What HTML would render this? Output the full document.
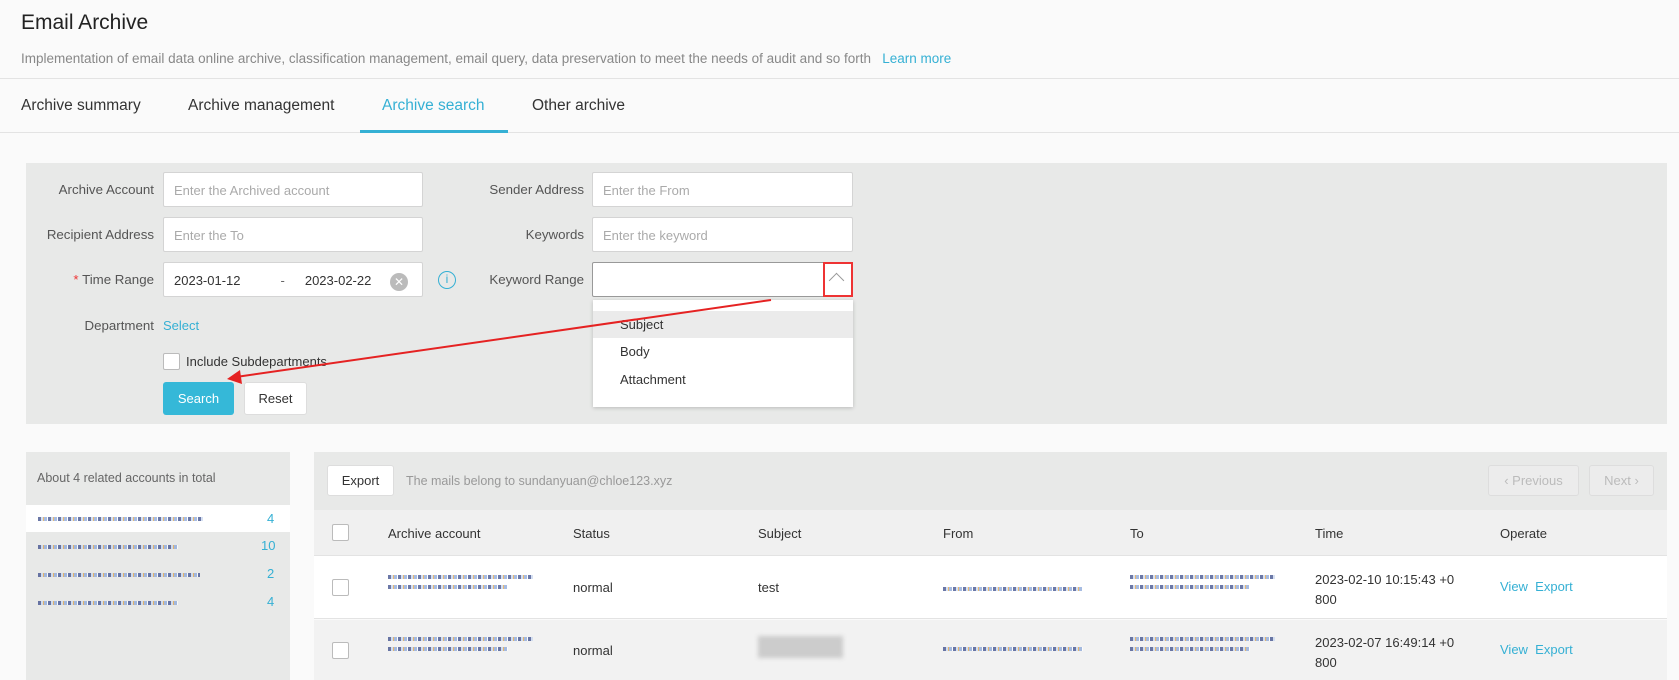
<!DOCTYPE html>
<html><head><meta charset="utf-8"><style>
*{box-sizing:border-box;margin:0;padding:0}
body{width:1679px;height:680px;overflow:hidden;background:#fafafa;font-family:"Liberation Sans",Arial,sans-serif;color:#333;position:relative;font-size:13px}
.a{position:absolute;white-space:nowrap}
.inp{position:absolute;background:#fff;border:1px solid #d4d4d4;border-radius:2px;height:35px;font-size:13px;color:#aaa;padding:10px 10px}
.lbl{position:absolute;text-align:right;width:140px;font-size:13.3px;color:#555}
.blur{position:absolute;height:4px;background:repeating-linear-gradient(90deg,#3a4b8a 0 3px,#c8d6ee 3px 5px,#e0a040 5px 6px,#8aa6d8 6px 9px,#fff 9px 10px);opacity:.75}
.btn{position:absolute;border:1px solid #ddd;border-radius:3px;background:#fff;text-align:center;font-size:13px}
.th{position:absolute;top:526px;font-size:13px;color:#333}
.cb{position:absolute;width:17px;height:17px;border:1px solid #bbb;border-radius:2px;background:#fff}
.op{color:#35b0d4}
</style></head><body>
<div class="a" style="left:21px;top:11px;font-size:21px;color:#222">Email Archive</div>
<div class="a" style="left:21px;top:51px;font-size:13.5px;color:#888">Implementation of email data online archive, classification management, email query, data preservation to meet the needs of audit and so forth &nbsp; <span style="color:#35b0d4">Learn more</span></div>
<div class="a" style="left:0;top:78px;width:1679px;height:1px;background:#e3e3e3"></div>
<div class="a" style="left:21px;top:97px;font-size:15.5px;color:#333">Archive summary</div>
<div class="a" style="left:188px;top:97px;font-size:15.5px;color:#333">Archive management</div>
<div class="a" style="left:382px;top:97px;font-size:15.5px;color:#35b0d4">Archive search</div>
<div class="a" style="left:532px;top:97px;font-size:15.5px;color:#333">Other archive</div>
<div class="a" style="left:0;top:132px;width:1679px;height:1px;background:#e3e3e3"></div>
<div class="a" style="left:360px;top:130px;width:148px;height:3px;background:#35b0d4"></div>

<div class="a" style="left:26px;top:163px;width:1641px;height:261px;background:#e8e9e8"></div>
<div class="lbl" style="left:14px;top:182px">Archive Account</div>
<div class="inp" style="left:163px;top:172px;width:260px">Enter the Archived account</div>
<div class="lbl" style="left:14px;top:227px">Recipient Address</div>
<div class="inp" style="left:163px;top:217px;width:260px">Enter the To</div>
<div class="lbl" style="left:14px;top:272px"><span style="color:#e33">*</span> Time Range</div>
<div class="inp" style="left:163px;top:262px;width:260px;color:#333">2023-01-12<span style="margin-left:40px;color:#666">-</span><span style="margin-left:20px">2023-02-22</span></div>
<div class="a" style="left:390px;top:273px;width:18px;height:18px;border-radius:50%;background:#bbb;color:#fff;font-size:12px;text-align:center;line-height:18px">✕</div>
<div class="a" style="left:438px;top:271px;width:18px;height:18px;border-radius:50%;border:1.5px solid #35b0d4;color:#35b0d4;font-size:12px;text-align:center;line-height:15px">i</div>
<div class="lbl" style="left:444px;top:182px">Sender Address</div>
<div class="inp" style="left:592px;top:172px;width:261px">Enter the From</div>
<div class="lbl" style="left:444px;top:227px">Keywords</div>
<div class="inp" style="left:592px;top:217px;width:261px">Enter the keyword</div>
<div class="lbl" style="left:444px;top:272px">Keyword Range</div>
<div class="inp" style="left:592px;top:262px;width:261px;border-color:#999"></div>
<div class="a" style="left:823px;top:262px;width:30px;height:35px;border:2px solid #e33"></div>
<div class="a" style="left:831px;top:269px;width:11px;height:11px;border-left:1.5px solid #999;border-top:1.5px solid #999;transform:translateY(6px) rotate(45deg)"></div>
<div class="lbl" style="left:14px;top:318px">Department</div>
<div class="a" style="left:163px;top:318px;color:#35b0d4">Select</div>
<div class="cb" style="left:163px;top:353px"></div>
<div class="a" style="left:186px;top:354px;color:#333">Include Subdepartments</div>
<div class="a" style="left:163px;top:382px;width:71px;height:33px;background:#35b8d8;border-radius:3px;color:#fff;text-align:center;line-height:33px">Search</div>
<div class="btn" style="left:244px;top:382px;width:63px;height:33px;line-height:31px">Reset</div>
<div class="a" style="left:593px;top:300px;width:260px;height:107px;background:#fff;box-shadow:0 1px 4px rgba(0,0,0,.2)"></div>
<div class="a" style="left:593px;top:311px;width:260px;height:27px;background:#ebebeb"></div>
<div class="a" style="left:620px;top:317px;color:#333">Subject</div>
<div class="a" style="left:620px;top:344px;color:#333">Body</div>
<div class="a" style="left:620px;top:372px;color:#333">Attachment</div>
<svg class="a" style="left:0;top:0" width="1679" height="680"><line x1="771" y1="300" x2="236" y2="377" stroke="#e52222" stroke-width="2"/><polygon points="227,379 240,370 242,384" fill="#e52222"/></svg>

<div class="a" style="left:26px;top:452px;width:264px;height:228px;background:#e8e9e8"></div>
<div class="a" style="left:37px;top:471px;font-size:12.5px;color:#666">About 4 related accounts in total</div>
<div class="a" style="left:26px;top:505px;width:264px;height:27px;background:#fff"></div>
<div class="blur" style="left:38px;top:517px;width:165px"></div><div class="a op" style="left:267px;top:511px">4</div>
<div class="blur" style="left:38px;top:545px;width:140px"></div><div class="a op" style="left:261px;top:538px">10</div>
<div class="blur" style="left:38px;top:573px;width:162px"></div><div class="a op" style="left:267px;top:566px">2</div>
<div class="blur" style="left:38px;top:601px;width:140px"></div><div class="a op" style="left:267px;top:594px">4</div>

<div class="a" style="left:314px;top:452px;width:1353px;height:58px;background:#e8e9e8"></div>
<div class="btn" style="left:327px;top:465px;width:67px;height:31px;line-height:29px">Export</div>
<div class="a" style="left:406px;top:474px;color:#999;font-size:12.5px">The mails belong to sundanyuan@chloe123.xyz</div>
<div class="btn" style="left:1488px;top:465px;width:91px;height:31px;line-height:29px;color:#bbb;background:#ececec">‹ Previous</div>
<div class="btn" style="left:1589px;top:465px;width:65px;height:31px;line-height:29px;color:#bbb;background:#ececec">Next ›</div>
<div class="a" style="left:314px;top:510px;width:1353px;height:46px;background:#f0f0f0;border-bottom:1px solid #e3e3e3"></div>
<div class="cb" style="left:332px;top:524px"></div>
<div class="th" style="left:388px">Archive account</div><div class="th" style="left:573px">Status</div><div class="th" style="left:758px">Subject</div><div class="th" style="left:943px">From</div><div class="th" style="left:1130px">To</div><div class="th" style="left:1315px">Time</div><div class="th" style="left:1500px">Operate</div>
<div class="a" style="left:314px;top:556px;width:1353px;height:63px;background:#fff;border-bottom:1px solid #e3e3e3"></div>
<div class="cb" style="left:332px;top:579px"></div>
<div class="blur" style="left:388px;top:575px;width:145px"></div><div class="blur" style="left:388px;top:585px;width:120px"></div>
<div class="a" style="left:573px;top:580px">normal</div><div class="a" style="left:758px;top:580px">test</div>
<div class="blur" style="left:943px;top:587px;width:140px"></div>
<div class="blur" style="left:1130px;top:575px;width:145px"></div><div class="blur" style="left:1130px;top:585px;width:120px"></div>
<div class="a" style="left:1315px;top:570px;line-height:20px">2023-02-10 10:15:43 +0<br>800</div>
<div class="a op" style="left:1500px;top:579px">View &nbsp;Export</div>
<div class="a" style="left:314px;top:620px;width:1353px;height:60px;background:#f2f2f2"></div>
<div class="cb" style="left:332px;top:642px"></div>
<div class="blur" style="left:388px;top:637px;width:145px"></div><div class="blur" style="left:388px;top:647px;width:120px"></div>
<div class="a" style="left:573px;top:643px">normal</div>
<div class="a" style="left:758px;top:636px;width:85px;height:22px;background:#ccc;filter:blur(2px)"></div>
<div class="blur" style="left:943px;top:647px;width:140px"></div>
<div class="blur" style="left:1130px;top:637px;width:145px"></div><div class="blur" style="left:1130px;top:647px;width:120px"></div>
<div class="a" style="left:1315px;top:633px;line-height:20px">2023-02-07 16:49:14 +0<br>800</div>
<div class="a op" style="left:1500px;top:642px">View &nbsp;Export</div>
</body></html>
